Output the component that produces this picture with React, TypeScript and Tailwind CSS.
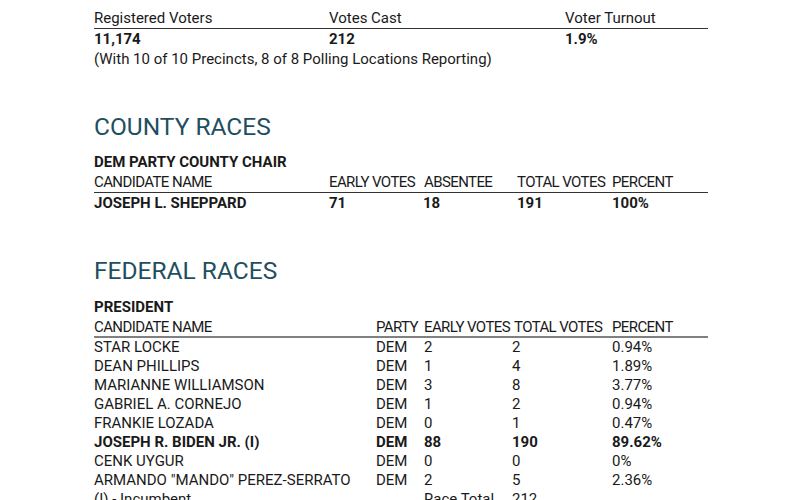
const topCols = "grid grid-cols-[235px_236px_1fr]";
const countyCols = "grid grid-cols-[235px_97px_91px_95px_1fr]";
const fedCols = "grid grid-cols-[282px_48px_88px_100px_1fr]";

interface Candidate {
  name: string;
  party: string;
  early: string;
  total: string;
  percent: string;
  bold?: boolean;
}

const president: Candidate[] = [
  { name: "STAR LOCKE", party: "DEM", early: "2", total: "2", percent: "0.94%" },
  { name: "DEAN PHILLIPS", party: "DEM", early: "1", total: "4", percent: "1.89%" },
  { name: "MARIANNE WILLIAMSON", party: "DEM", early: "3", total: "8", percent: "3.77%" },
  { name: "GABRIEL A. CORNEJO", party: "DEM", early: "1", total: "2", percent: "0.94%" },
  { name: "FRANKIE LOZADA", party: "DEM", early: "0", total: "1", percent: "0.47%" },
  { name: "JOSEPH R. BIDEN JR. (I)", party: "DEM", early: "88", total: "190", percent: "89.62%", bold: true },
  { name: "CENK UYGUR", party: "DEM", early: "0", total: "0", percent: "0%" },
  { name: 'ARMANDO "MANDO" PEREZ-SERRATO', party: "DEM", early: "2", total: "5", percent: "2.36%" },
];

function SectionTitle({ children }: { children: string }) {
  return (
    <h2 className="h-[28px] text-[24.5px] leading-[28px] text-[#1f4f5f]">
      {children}
    </h2>
  );
}

export default function App() {
  return (
    <div
      className="h-[500px] w-[800px] overflow-hidden bg-white pt-[8px] pl-[94px] text-[15px] leading-[20px] text-[#1a1a1a]"
      style={{ fontFamily: "Roboto, 'Liberation Sans', sans-serif" }}
    >
      <div className="w-[614px]">
        <div className={`${topCols} border-b-[1.5px] border-[#333] h-[21px]`}>
          <span>Registered Voters</span>
          <span>Votes Cast</span>
          <span>Voter Turnout</span>
        </div>
        <div className={`${topCols} h-[20px] font-bold`}>
          <span>11,174</span>
          <span>212</span>
          <span>1.9%</span>
        </div>
        <p className="h-[20px] whitespace-nowrap">(With 10 of 10 Precincts, 8 of 8 Polling Locations Reporting)</p>

        <div className="mt-[44px]">
          <SectionTitle>COUNTY RACES</SectionTitle>
        </div>
        <p className="mt-[11px] h-[20px] font-bold">DEM PARTY COUNTY CHAIR</p>
        <div className={`${countyCols} h-[21px] border-b-[1.5px] border-[#333] whitespace-nowrap tracking-[-0.6px]`}>
          <span>CANDIDATE NAME</span>
          <span>EARLY VOTES</span>
          <span className="-ml-[2px]">ABSENTEE</span>
          <span>TOTAL VOTES</span>
          <span>PERCENT</span>
        </div>
        <div className={`${countyCols} h-[20px] font-bold`}>
          <span>JOSEPH L. SHEPPARD</span>
          <span>71</span>
          <span className="-ml-[3px]">18</span>
          <span>191</span>
          <span>100%</span>
        </div>

        <div className="mt-[44px]">
          <SectionTitle>FEDERAL RACES</SectionTitle>
        </div>
        <p className="mt-[12px] h-[20px] font-bold">PRESIDENT</p>
        <div className={`${fedCols} h-[21px] border-b-2 border-[#808080] whitespace-nowrap tracking-[-0.6px]`}>
          <span>CANDIDATE NAME</span>
          <span>PARTY</span>
          <span>EARLY VOTES</span>
          <span className="ml-[2px]">TOTAL VOTES</span>
          <span>PERCENT</span>
        </div>
        {president.map((c) => (
          <div
            key={c.name}
            className={`${fedCols} h-[19px] leading-[19px] ${c.bold ? "font-bold" : ""}`}
          >
            <span className="whitespace-nowrap">{c.name}</span>
            <span>{c.party}</span>
            <span>{c.early}</span>
            <span>{c.total}</span>
            <span>{c.percent}</span>
          </div>
        ))}
        <div className={`${fedCols} h-[19px] leading-[19px] whitespace-nowrap`}>
          <span>(I) - Incumbent</span>
          <span></span>
          <span>Race Total</span>
          <span>212</span>
          <span></span>
        </div>
      </div>
    </div>
  );
}
